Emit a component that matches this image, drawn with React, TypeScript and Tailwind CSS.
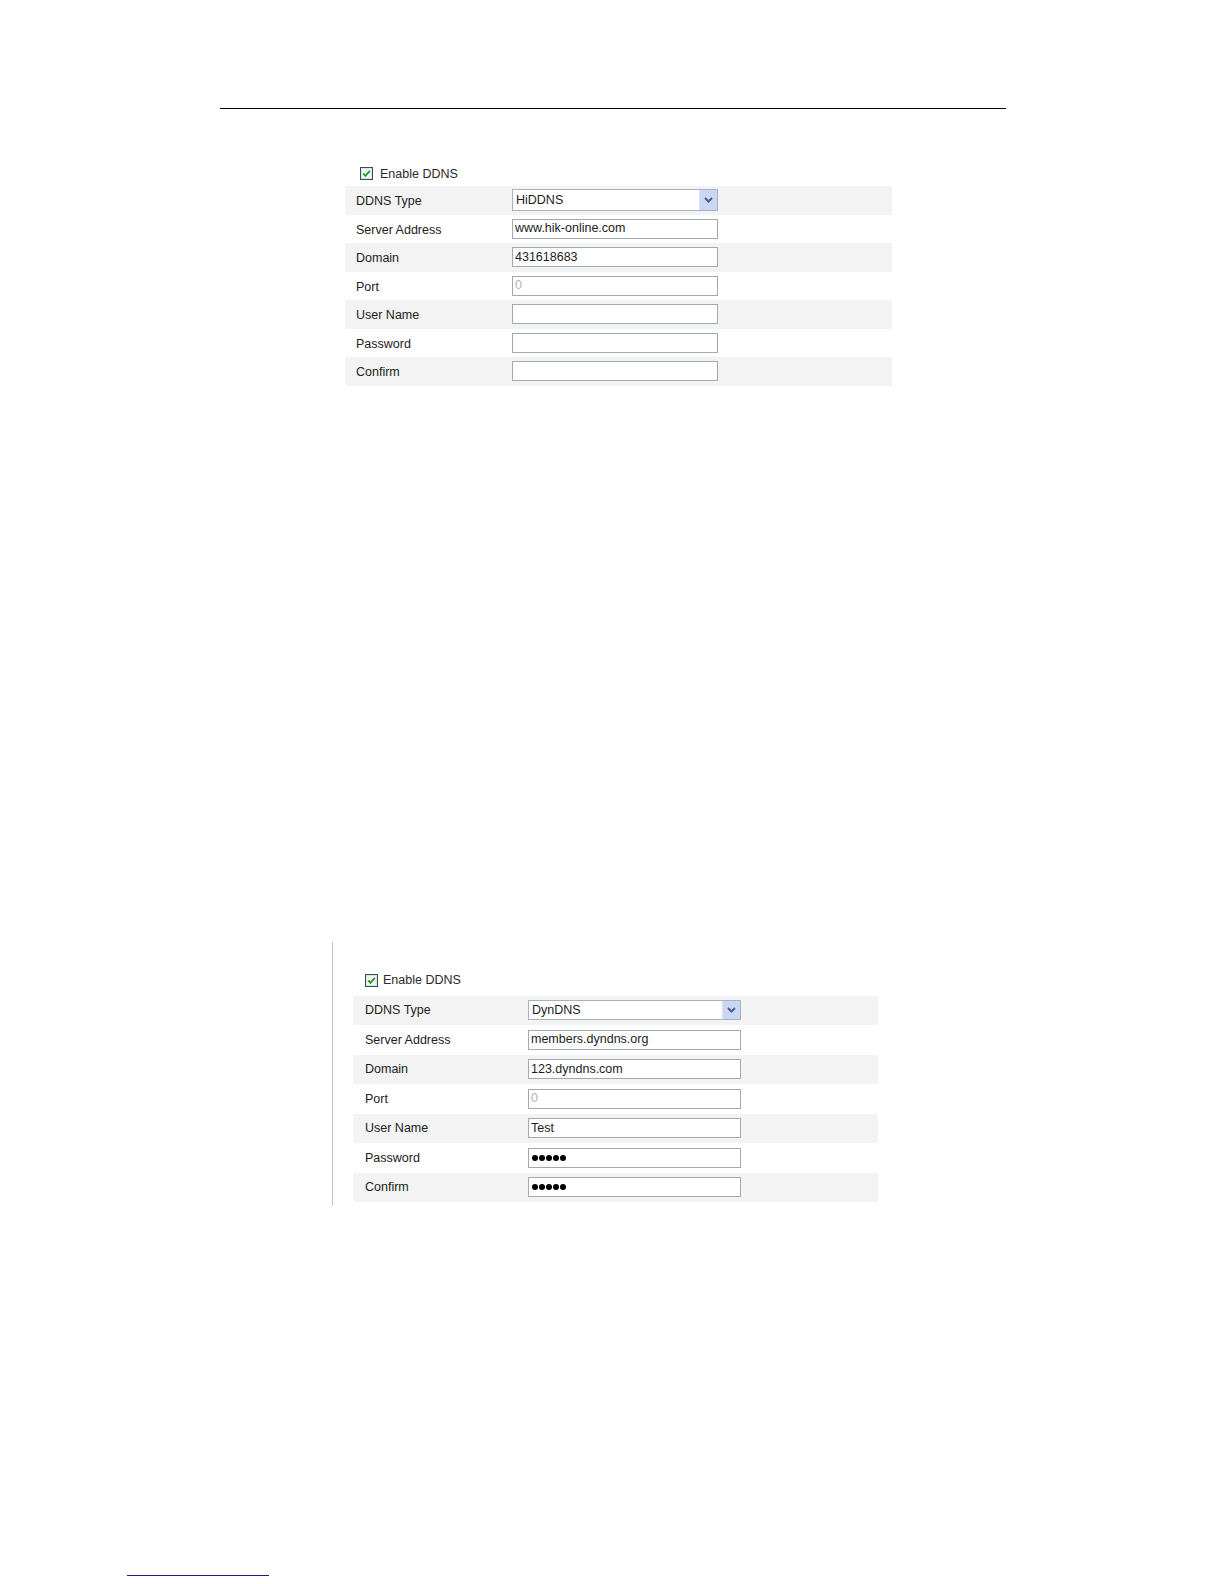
import React from "react";

type Field = {
  label: string;
  value?: string;
  kind?: "select" | "text" | "disabled" | "password";
};

const firstForm: Field[] = [
  { label: "DDNS Type", value: "HiDDNS", kind: "select" },
  { label: "Server Address", value: "www.hik-online.com" },
  { label: "Domain", value: "431618683" },
  { label: "Port", value: "0", kind: "disabled" },
  { label: "User Name", value: "" },
  { label: "Password", value: "" },
  { label: "Confirm", value: "" },
];

const secondForm: Field[] = [
  { label: "DDNS Type", value: "DynDNS", kind: "select" },
  { label: "Server Address", value: "members.dyndns.org" },
  { label: "Domain", value: "123.dyndns.com" },
  { label: "Port", value: "0", kind: "disabled" },
  { label: "User Name", value: "Test" },
  { label: "Password", kind: "password" },
  { label: "Confirm", kind: "password" },
];

const CheckBox = () => (
  <svg width="13" height="13" viewBox="0 0 13 13" className="shrink-0">
    <rect x="0.5" y="0.5" width="12" height="12" fill="#f4f4f4" stroke="#2f4f63" />
    <rect x="1.5" y="1.5" width="10" height="10" fill="none" stroke="#dfe3e6" />
    <path d="M3.2 6.4 L5.4 8.8 L9.8 3.8" fill="none" stroke="#21a121" strokeWidth="1.9" />
  </svg>
);

const Chevron = () => (
  <svg width="9" height="6" viewBox="0 0 9 6">
    <path d="M1 1 L4.5 4.5 L8 1" fill="none" stroke="#4a5d85" strokeWidth="2" />
  </svg>
);

const Control = ({ field, width, tall }: { field: Field; width: string; tall: string }) => {
  if (field.kind === "select") {
    return (
      <div className={`flex items-stretch ${width} ${tall} border border-[#a7b1c2] bg-white`}>
        <span className="flex-1 pl-[3px] flex items-center text-[#1c1c1c]">{field.value}</span>
        <span className="w-[18px] flex items-center justify-center bg-[#c9d7f4] border-l border-[#dbe4f7]">
          <Chevron />
        </span>
      </div>
    );
  }
  if (field.kind === "password") {
    return (
      <div className={`flex items-center gap-[1px] pl-[3px] ${width} h-[20px] border border-[#a3a9b3] bg-white`}>
        {[0, 1, 2, 3, 4].map((i) => (
          <span key={i} className="w-[6px] h-[6px] rounded-full bg-black" />
        ))}
      </div>
    );
  }
  return (
    <div
      className={`flex items-center pl-[2px] ${width} h-[20px] border border-[#a3a9b3] bg-white ${
        field.kind === "disabled" ? "text-[#b4b4b4]" : "text-[#1c1c1c]"
      }`}
    >
      {field.value}
    </div>
  );
};

export default function App() {
  return (
    <div className="w-[1224px] min-h-[1584px] bg-white pt-[108px] text-[12.5px] text-[#222] font-['Liberation_Sans',Arial,sans-serif]">
      <div className="ml-[220px] w-[786px] h-px bg-black" />

      {/* HiDDNS settings */}
      <div className="ml-[345px] w-[547px] mt-[58px]">
        <div className="flex items-center gap-[7px] pl-[15px] h-[13px] text-[#2a2a2a]">
          <CheckBox />
          <span className="pt-[2px]">Enable DDNS</span>
        </div>
        <div className="mt-[6px]">
          {firstForm.map((f, i) => (
            <div
              key={f.label}
              className={`flex items-center h-[28.5px] ${i % 2 === 0 ? "bg-[#f3f3f3]" : "bg-white"}`}
            >
              <span className="w-[167px] pl-[11px] pt-[3px]">{f.label}</span>
              <Control field={f} width="w-[206px]" tall="h-[22px]" />
            </div>
          ))}
        </div>
      </div>

      {/* DynDNS settings */}
      <div className="ml-[332px] w-[560px] mt-[556px] border-l border-[#c4c4c4] pt-[32px] pb-[4px]">
        <div className="flex items-center gap-[5px] pl-[32px] h-[13px] text-[#2a2a2a]">
          <CheckBox />
          <span>Enable DDNS</span>
        </div>
        <div className="ml-[20px] w-[525px] mt-[9px]">
          {secondForm.map((f, i) => (
            <div
              key={f.label}
              className={`flex items-center h-[29.5px] ${i % 2 === 0 ? "bg-[#f3f3f3]" : "bg-white"}`}
            >
              <span className="w-[175px] pl-[12px] pt-[1px]">{f.label}</span>
              <Control field={f} width="w-[213px]" tall="h-[20px]" />
            </div>
          ))}
        </div>
      </div>

      <div className="ml-[127px] w-[142px] h-px bg-[#1b1b8c] mt-[369px]" />
    </div>
  );
}
